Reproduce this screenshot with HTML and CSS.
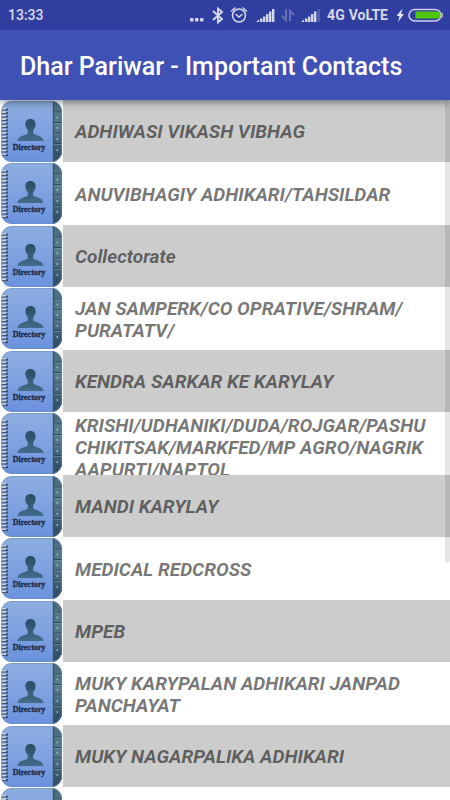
FILE: index.html
```
<!DOCTYPE html>
<html lang="en">
<head>
<meta charset="utf-8">
<meta name="viewport" content="width=device-width, initial-scale=1">
<title>Dhar Pariwar - Important Contacts</title>
<link rel="stylesheet" href="styles.css">
</head>
<body>
<svg class="defs" aria-hidden="true">
  <defs>
    <linearGradient id="cover" x1="0" y1="0" x2="0" y2="1">
      <stop offset="0" stop-color="#8eaee0"/>
      <stop offset="0.5" stop-color="#7ea1e0"/>
      <stop offset="1" stop-color="#6a92dd"/>
    </linearGradient>
    <linearGradient id="tabs" x1="0" y1="0" x2="0" y2="1">
      <stop offset="0" stop-color="#486a7a"/>
      <stop offset="0.4" stop-color="#557d8c"/>
      <stop offset="1" stop-color="#2d4960"/>
    </linearGradient>
    <linearGradient id="figure" x1="0" y1="0" x2="0" y2="1">
      <stop offset="0" stop-color="#2b4d66"/>
      <stop offset="1" stop-color="#426c8a"/>
    </linearGradient>
    <clipPath id="tile"><rect x="1" y="1" width="61" height="61" rx="11"/></clipPath>
    <symbol id="book" viewBox="0 0 63 62">
      <g clip-path="url(#tile)">
        <rect x="1" y="1" width="61" height="61" fill="url(#cover)"/>
        <rect x="53" y="1" width="9" height="61" fill="url(#tabs)"/>
        <path d="M53.500 1v61" stroke="#35566f" stroke-width="1.400"/>
        <path d="M54 12h8M54 22.500h8M54 33h8M54 43.500h8M54 54h8" stroke="#2c4a5e"/>
        <path d="M54 13h8M54 23.500h8M54 34h8M54 44.500h8" stroke="#7499aa" stroke-width=".6"/>
        <path d="M56.500 17.500h1.500M56.500 28h1.500M56.500 39h1.500M56.500 50h1.500" stroke="#a9c1cd" stroke-width="1.400"/>
        <rect x="1.500" y="1.500" width="60" height="60" rx="10.500" fill="none" stroke="#6488b8" stroke-opacity=".5"/>
      </g>
      <path d="M4 8v48" stroke="#c9d3e0" stroke-width="5" stroke-dasharray="1.400 2.100"/>
      <path d="M4.500 9.400v47" stroke="#4a5668" stroke-width="5" stroke-dasharray="1.200 2.300"/>
      <path d="M7 8.500v48" stroke="#2f4568" stroke-width="1.600" stroke-dasharray="2.200 1.300"/>
      <path d="M30.500 19c-3.700 0-5.300 2.500-5.100 5.600.1 2.600 1.200 4.400 2.400 5.500v3.300c-2 2-9.700 1.800-10.300 7.600h26c-.6-5.800-8.300-5.600-10.300-7.600v-3.300c1.200-1.100 2.300-2.900 2.400-5.500.2-3.100-1.400-5.600-5.100-5.600z" fill="url(#figure)"/>
      <text x="29" y="50" text-anchor="middle" class="book-text">Directory</text>
    </symbol>
  </defs>
</svg>

<header class="top">
  <div class="status">
    <span>13:33</span>
    <svg class="status-icons" viewBox="0 0 134 30" aria-hidden="true">
      <g fill="#d6d9ec">
        <rect x="1" y="18" width="3.500" height="3.500" rx="1"/><rect x="6" y="18" width="3.500" height="3.500" rx="1"/><rect x="11" y="18" width="3.500" height="3.500" rx="1"/>
        <path d="M67 22l3-2.500V22zM71 18.500h2.400V22H71zM74 16.500h2.400V22H74zM77 14h2.400v8H77zM80 11.500h2.400V22H80zM83 9h2.400v13H83z"/>
        <path d="M112 22l3-2.500V22zM116 18.500h2.400V22H116zM119 16.500h2.400V22H119zM122 14h2.400v8H122zM125 11.500h2.400V22H125z"/>
      </g>
      <path d="M128.500 9h2.500v13h-2.500z" fill="#5360af"/>
      <path d="M24 11l9 8-4 3.500V8.500l4 3.500-9 8" fill="none" stroke="#d6d9ec" stroke-width="1.900"/>
      <g fill="none" stroke="#d6d9ec" stroke-width="1.500" stroke-linecap="round">
        <circle cx="50" cy="15.500" r="6.500"/><path d="M47 14.500l3 2.500 3-2.500M42.500 11l3.500-3M57.500 11l-3.500-3"/>
      </g>
      <path d="M97 9v11l-4-4M101 21V11l4 4" fill="none" stroke="#6570b8" stroke-width="2"/>
    </svg>
    <span class="network">4G</span>
    <span class="network">VoLTE</span>
    <svg class="battery" viewBox="0 0 48 30" aria-hidden="true">
      <path d="M6.500 8.500l-6 7.500h3l-1.500 6 6-8H5z" fill="#e5e7f4"/>
      <rect x="13" y="9.500" width="32" height="11.500" rx="5.750" fill="none" stroke="#ccd0e8" stroke-width="1.500"/>
      <path d="M19.500 11.500H41a3.500 3.500 0 0 1 0 7H19.500z" fill="#4fc50b"/>
      <path d="M46.300 13v4.500" stroke="#ccd0e8"/>
    </svg>
  </div>
  <h1 class="title">Dhar Pariwar - Important Contacts</h1>
</header>

<main class="content">
  <ul class="list">
    <li class="row"><svg class="icon" aria-hidden="true"><use href="#book"/></svg><span class="label">ADHIWASI VIKASH VIBHAG</span></li>
    <li class="row"><svg class="icon" aria-hidden="true"><use href="#book"/></svg><span class="label">ANUVIBHAGIY ADHIKARI/TAHSILDAR</span></li>
    <li class="row"><svg class="icon" aria-hidden="true"><use href="#book"/></svg><span class="label">Collectorate</span></li>
    <li class="row"><svg class="icon" aria-hidden="true"><use href="#book"/></svg><span class="label">JAN SAMPERK/CO OPRATIVE/SHRAM/<wbr>PURATATV/</span></li>
    <li class="row"><svg class="icon" aria-hidden="true"><use href="#book"/></svg><span class="label">KENDRA SARKAR KE KARYLAY</span></li>
    <li class="row"><svg class="icon" aria-hidden="true"><use href="#book"/></svg><span class="label">KRISHI/UDHANIKI/DUDA/ROJGAR/PASHU CHIKITSAK/MARKFED/MP AGRO/NAGRIK AAPURTI/NAPTOL</span></li>
    <li class="row"><svg class="icon" aria-hidden="true"><use href="#book"/></svg><span class="label">MANDI KARYLAY</span></li>
    <li class="row"><svg class="icon" aria-hidden="true"><use href="#book"/></svg><span class="label">MEDICAL REDCROSS</span></li>
    <li class="row"><svg class="icon" aria-hidden="true"><use href="#book"/></svg><span class="label">MPEB</span></li>
    <li class="row"><svg class="icon" aria-hidden="true"><use href="#book"/></svg><span class="label">MUKY KARYPALAN ADHIKARI JANPAD PANCHAYAT</span></li>
    <li class="row"><svg class="icon" aria-hidden="true"><use href="#book"/></svg><span class="label">MUKY NAGARPALIKA ADHIKARI</span></li>
    <li class="row"><svg class="icon" aria-hidden="true"><use href="#book"/></svg><span class="label"></span></li>
  </ul>
  <div class="scrollbar"></div>
</main>
</body>
</html>
```
FILE: styles.css
```
* {
  box-sizing: border-box;
}

body {
  margin: 0;
  height: 100vh;
  display: flex;
  flex-direction: column;
  overflow: hidden;
  background: #fff;
  font-family: Roboto, "Liberation Sans", sans-serif;
}

.defs {
  position: absolute;
  width: 0;
  height: 0;
}

.top {
  position: relative;
  z-index: 1;
  background: #3f51b5;
  box-shadow: 0 2px 8px rgba(0, 0, 0, 0.45);
}

.status {
  display: flex;
  align-items: center;
  height: 30px;
  padding: 0 6px 0 8px;
  background: #303f9f;
  color: #d6d9ec;
  font-size: 14px;
  font-weight: 500;
}

.status-icons {
  width: 134px;
  height: 30px;
  margin-left: auto;
}

.network {
  margin-left: 4px;
  font-weight: 700;
}

.battery {
  width: 48px;
  height: 30px;
  margin-left: 8px;
}

.title {
  margin: 0;
  padding: 22px 20px 18px;
  color: #fff;
  font-size: 25px;
  font-weight: 500;
  line-height: 30px;
  white-space: nowrap;
}

.content {
  position: relative;
  flex: 1;
  min-height: 0;
  overflow: hidden;
}

.list {
  display: grid;
  grid-auto-rows: 62px 63px;
  margin: 0;
  padding: 0;
  list-style: none;
}

.row {
  display: flex;
  overflow: hidden;
}

.icon {
  flex: none;
  width: 63px;
  height: 62px;
}

.book-text {
  font: 700 8px "Liberation Serif", serif;
  fill: #1c2b45;
  stroke: #1c2b45;
  stroke-width: 0.3px;
}

.label {
  flex: 1;
  display: flex;
  align-items: safe center;
  padding: 3px 20px 1px 12px;
  color: rgba(0, 0, 0, 0.54);
  font-size: 19px;
  font-style: italic;
  font-weight: 700;
  line-height: 22px;
}

.row:nth-child(odd) .label {
  background: #ccc;
}

.scrollbar {
  position: absolute;
  top: 0;
  right: 0;
  width: 5px;
  height: 66%;
  background: rgba(0, 0, 0, 0.1);
}
```
